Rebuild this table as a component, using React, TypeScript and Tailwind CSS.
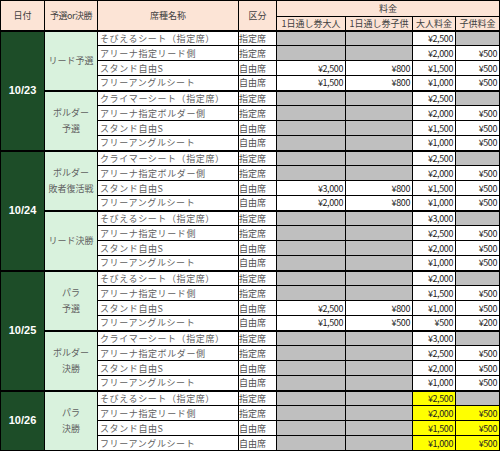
import React from 'react';

type Row = {
  seat: string;
  kind: string;
  passAdult?: string;
  passChild?: string;
  adult: string;
  child?: string;
};

type Group = { label: string[]; rows: Row[]; highlight?: boolean };
type Day = { date: string; groups: Group[] };

const lead = (a: string, b: string, c: string, d: string, pa?: [string, string]): Row[] => [
  { seat: 'そびえるシート（指定席）', kind: '指定席', adult: a },
  { seat: 'アリーナ指定リード側', kind: '指定席', adult: b, child: '¥500' },
  { seat: 'スタンド自由S', kind: '自由席', adult: c, child: '¥500' },
  { seat: 'フリーアングルシート', kind: '自由席', adult: d, child: '¥500' },
];

const boulder = (a: string, b: string, c: string, d: string): Row[] => [
  { seat: 'クライマーシート（指定席）', kind: '指定席', adult: a },
  { seat: 'アリーナ指定ボルダー側', kind: '指定席', adult: b, child: '¥500' },
  { seat: 'スタンド自由S', kind: '自由席', adult: c, child: '¥500' },
  { seat: 'フリーアングルシート', kind: '自由席', adult: d, child: '¥500' },
];

const withPass = (rows: Row[], p: [string, string, string, string]): Row[] => {
  const copy = rows.map(r => ({ ...r }));
  copy[2].passAdult = p[0];
  copy[2].passChild = p[1];
  copy[3].passAdult = p[2];
  copy[3].passChild = p[3];
  return copy;
};

const paraQual = withPass(lead('¥2,000', '¥1,500', '¥1,000', '¥500'), ['¥2,500', '¥800', '¥1,500', '¥500']);
paraQual[3].child = '¥200';

const days: Day[] = [
  {
    date: '10/23',
    groups: [
      { label: ['リード予選'], rows: withPass(lead('¥2,500', '¥2,000', '¥1,500', '¥1,000'), ['¥2,500', '¥800', '¥1,500', '¥800']) },
      { label: ['ボルダー', '予選'], rows: boulder('¥2,500', '¥2,000', '¥1,500', '¥1,000') },
    ],
  },
  {
    date: '10/24',
    groups: [
      { label: ['ボルダー', '敗者復活戦'], rows: withPass(boulder('¥2,500', '¥2,000', '¥1,500', '¥1,000'), ['¥3,000', '¥800', '¥2,000', '¥800']) },
      { label: ['リード決勝'], rows: lead('¥3,000', '¥2,500', '¥2,000', '¥1,000') },
    ],
  },
  {
    date: '10/25',
    groups: [
      { label: ['パラ', '予選'], rows: paraQual },
      { label: ['ボルダー', '決勝'], rows: boulder('¥3,000', '¥2,500', '¥2,000', '¥1,000') },
    ],
  },
  {
    date: '10/26',
    groups: [
      { label: ['パラ', '決勝'], rows: lead('¥2,500', '¥2,000', '¥1,500', '¥1,000'), highlight: true },
    ],
  },
];

const cell = 'border border-black p-0 h-[15px]';
const gray = 'bg-[#bfbfbf]';

export default function App() {
  return (
    <div className="w-[500px] h-[455px] bg-white">
      <table
        className="border-collapse table-fixed w-[499px] text-[9px] leading-none"
        style={{ fontFamily: '"Noto Sans CJK JP", "Noto Sans", sans-serif' }}
      >
        <colgroup>
          <col className="w-[44px]" />
          <col className="w-[53px]" />
          <col className="w-[141px]" />
          <col className="w-[38px]" />
          <col className="w-[69px]" />
          <col className="w-[67px]" />
          <col className="w-[43px]" />
          <col className="w-[44px]" />
        </colgroup>
        <thead className="bg-[#fce4d6] text-[#404040]">
          <tr>
            <th rowSpan={2} className="border border-black border-b-2 font-normal">日付</th>
            <th rowSpan={2} className="border border-black border-b-2 font-normal tracking-[-0.5px]">予選or決勝</th>
            <th rowSpan={2} className="border border-black border-b-2 font-normal">席種名称</th>
            <th rowSpan={2} className="border border-black border-b-2 font-normal">区分</th>
            <th colSpan={4} className="border border-black font-normal h-[16px]">料金</th>
          </tr>
          <tr>
            <th className="border border-black border-b-2 font-normal h-[14px]">1日通し券大人</th>
            <th className="border border-black border-b-2 font-normal">1日通し券子供</th>
            <th className="border border-black border-b-2 font-normal">大人料金</th>
            <th className="border border-black border-b-2 font-normal">子供料金</th>
          </tr>
        </thead>
        <tbody>
          {days.map(day =>
            day.groups.map((group, gi) =>
              group.rows.map((row, ri) => {
                const top = ri === 0 ? 'border-t-2' : '';
                const price = 'text-right pr-[2px] tracking-[-0.4px] text-[#222]';
                return (
                  <tr key={`${day.date}-${gi}-${ri}`}>
                    {gi === 0 && ri === 0 && (
                      <td
                        rowSpan={day.groups.length * 4}
                        className="border border-black border-t-2 bg-[#1d4d28] text-white text-center font-bold text-[11px]"
                        style={{ fontFamily: '"Liberation Sans", Arial, sans-serif' }}
                      >
                        {day.date}
                      </td>
                    )}
                    {ri === 0 && (
                      <td rowSpan={4} className="border border-black border-t-2 bg-[#d9f2dd] text-[#606060] text-center">
                        <div className="flex flex-col gap-[7px] items-center">
                          {group.label.map(l => (
                            <span key={l}>{l}</span>
                          ))}
                        </div>
                      </td>
                    )}
                    <td className={`${cell} ${top} pl-[2px] text-[#606060] tracking-[0.6px] whitespace-nowrap overflow-hidden`}>{row.seat}</td>
                    <td className={`${cell} ${top} text-[#505050] whitespace-nowrap overflow-hidden`}>{row.kind}</td>
                    <td className={`${cell} ${top} ${row.passAdult ? price : gray}`}>{row.passAdult}</td>
                    <td className={`${cell} ${top} ${row.passChild ? price : gray}`}>{row.passChild}</td>
                    <td className={`${cell} ${top} ${price} ${group.highlight ? 'bg-[#ffff00]' : ''}`}>{row.adult}</td>
                    <td className={`${cell} ${top} ${row.child ? price : gray} ${row.child && group.highlight ? 'bg-[#ffff00]' : ''}`}>{row.child}</td>
                  </tr>
                );
              })
            )
          )}
        </tbody>
      </table>
    </div>
  );
}
